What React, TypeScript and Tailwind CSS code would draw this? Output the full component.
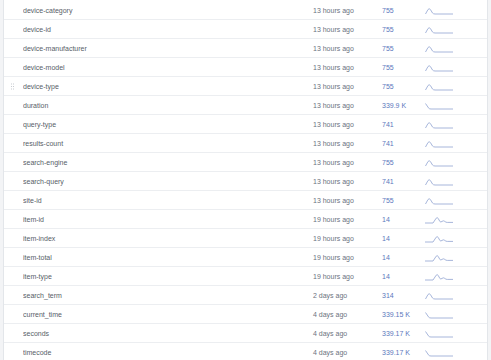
import React from "react";

type Row = { name: string; seen: string; count: string; spark: "peak" | "drop" | "late" };

const rows: Row[] = [
  { name: "device-category", seen: "13 hours ago", count: "755", spark: "peak" },
  { name: "device-id", seen: "13 hours ago", count: "755", spark: "peak" },
  { name: "device-manufacturer", seen: "13 hours ago", count: "755", spark: "peak" },
  { name: "device-model", seen: "13 hours ago", count: "755", spark: "peak" },
  { name: "device-type", seen: "13 hours ago", count: "755", spark: "peak" },
  { name: "duration", seen: "13 hours ago", count: "339.9 K", spark: "drop" },
  { name: "query-type", seen: "13 hours ago", count: "741", spark: "peak" },
  { name: "results-count", seen: "13 hours ago", count: "741", spark: "peak" },
  { name: "search-engine", seen: "13 hours ago", count: "755", spark: "peak" },
  { name: "search-query", seen: "13 hours ago", count: "741", spark: "peak" },
  { name: "site-id", seen: "13 hours ago", count: "755", spark: "peak" },
  { name: "item-id", seen: "19 hours ago", count: "14", spark: "late" },
  { name: "item-index", seen: "19 hours ago", count: "14", spark: "late" },
  { name: "item-total", seen: "19 hours ago", count: "14", spark: "late" },
  { name: "item-type", seen: "19 hours ago", count: "14", spark: "late" },
  { name: "search_term", seen: "2 days ago", count: "314", spark: "peak" },
  { name: "current_time", seen: "4 days ago", count: "339.15 K", spark: "drop" },
  { name: "seconds", seen: "4 days ago", count: "339.17 K", spark: "drop" },
  { name: "timecode", seen: "4 days ago", count: "339.17 K", spark: "drop" },
];

// sparkline shapes, 28x8 box, baseline at y=7
const paths = {
  peak: "M0.5 7 L3 2.5 Q4.2 1 5.4 2.5 L7.5 6 Q8.4 7 10 7 L28 7",
  drop: "M0.5 1.5 L3.8 6.3 Q4.5 7 6 7 L28 7",
  late: "M0 7 L8 7 L11.2 2.2 Q12.2 1 13.2 2.4 L14.8 5.4 Q15.8 6.6 17 5.4 Q18.4 4.2 19.8 5.4 Q20.8 6.4 22.2 6.4 L28 6.4",
};

function Spark({ kind }: { kind: Row["spark"] }) {
  return (
    <svg width="28" height="8" viewBox="0 0 28 8" className="block">
      <path d={paths[kind]} fill="none" stroke="#a7b6db" strokeWidth="1" strokeLinejoin="round" />
    </svg>
  );
}

function Grip() {
  return (
    <svg width="3" height="7" viewBox="0 0 3 7" className="absolute left-[7px] top-[6px]">
      {[0.5, 3, 5.5].map((y) => (
        <g key={y}>
          <rect x="0" y={y} width="1" height="1" fill="#c7cbd1" />
          <rect x="2" y={y} width="1" height="1" fill="#c7cbd1" />
        </g>
      ))}
    </svg>
  );
}

export default function App() {
  return (
    <div className="h-[360px] overflow-hidden bg-[#f3f4f6] px-[3px]" style={{ fontFamily: '"Liberation Sans", Arial, sans-serif' }}>
      <div className="bg-white border-x border-[#e3e6ea] h-full pt-[1px]">
        {rows.map((r) => (
          <div
            key={r.name}
            className="relative grid grid-cols-[290px_69px_43px_1fr] items-center h-[19px] pl-[19px] pt-[2px] border-b border-[#eceef1] text-[7px]"
          >
            {r.name === "device-type" && <Grip />}
            <span className="text-[#575e68] truncate">{r.name}</span>
            <span className="text-[#6b7280]">{r.seen}</span>
            <span className="text-[#5b78bd]">{r.count}</span>
            <div className="-mt-[1px]">
              <Spark kind={r.spark} />
            </div>
          </div>
        ))}
      </div>
    </div>
  );
}
